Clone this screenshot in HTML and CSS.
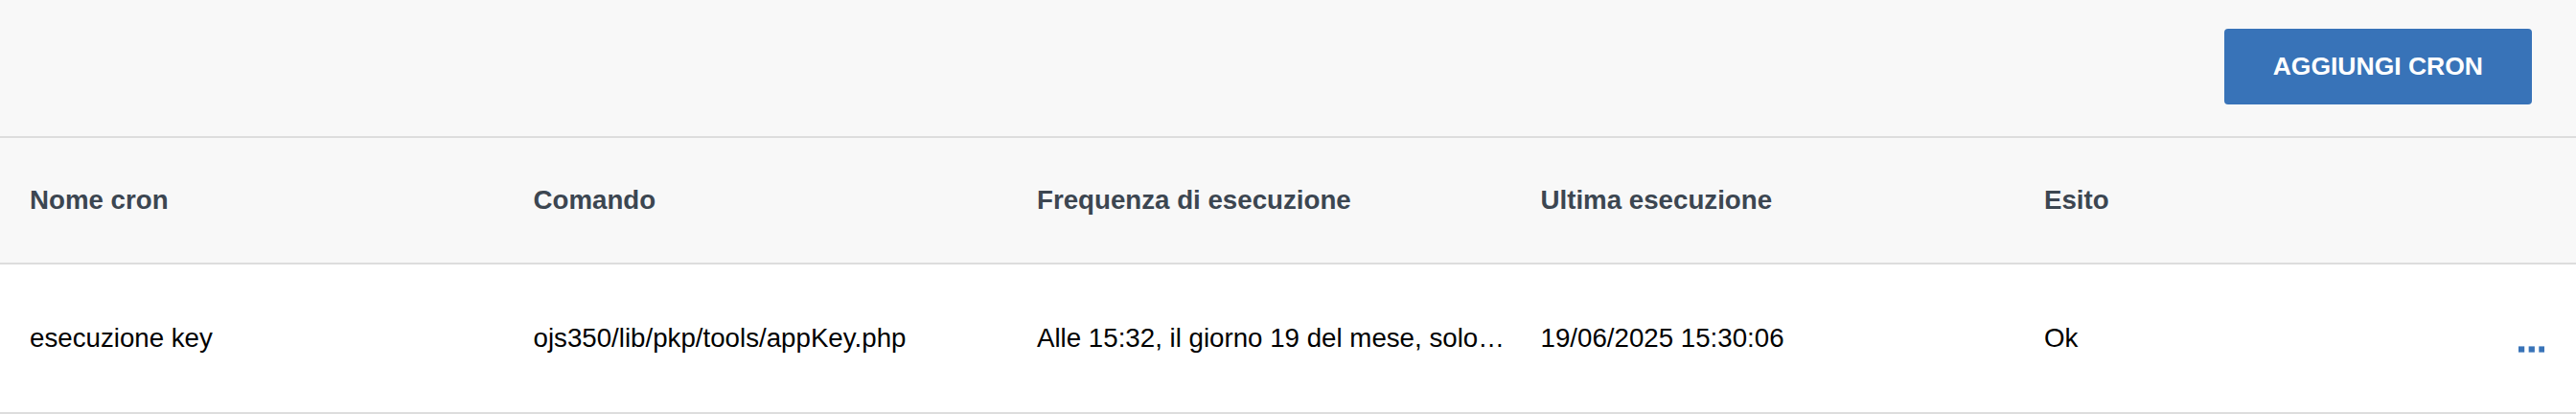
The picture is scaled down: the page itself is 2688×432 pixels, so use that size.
FILE: index.html
```html
<!DOCTYPE html>
<html lang="it">
<head>
    <meta charset="UTF-8">
    <meta name="viewport" content="width=device-width, initial-scale=1.0">
    <title>Cron</title>
    <link rel="stylesheet" href="styles.css">
</head>
<body>
    <div class="toolbar">
        <button class="add-btn">AGGIUNGI CRON</button>
    </div>

    <div class="cron-table">
        <div class="row head">
            <div class="cell">Nome cron</div>
            <div class="cell">Comando</div>
            <div class="cell">Frequenza di esecuzione</div>
            <div class="cell">Ultima esecuzione</div>
            <div class="cell">Esito</div>
            <div class="cell"></div>
        </div>
        <div class="row">
            <div class="cell">esecuzione key</div>
            <div class="cell">ojs350/lib/pkp/tools/appKey.php</div>
            <div class="cell">Alle 15:32, il giorno 19 del mese, solo…</div>
            <div class="cell">19/06/2025 15:30:06</div>
            <div class="cell">Ok</div>
            <div class="cell actions">
                <svg width="31" height="7" viewBox="0 0 31 7" fill="#3873b8">
                    <rect x="0" y="0" width="7" height="7"/>
                    <rect x="12" y="0" width="7" height="7"/>
                    <rect x="24" y="0" width="7" height="7"/>
                </svg>
            </div>
        </div>
    </div>
</body>
</html>
```

FILE: styles.css
```css
/* Stili generali */
body {
    margin: 0;
    font-family: "Liberation Sans", Arial, sans-serif;
    background-color: #fff;
    color: #000;
}

/* Barra superiore */
.toolbar {
    display: flex;
    justify-content: flex-end;
    padding: 30px 46px 33px;
    background-color: #f8f8f8;
    border-bottom: 2px solid #dddddd;
}

.add-btn {
    height: 79px;
    padding: 0 51px;
    font-family: inherit;
    font-size: 26.5px;
    font-weight: bold;
    color: #fff;
    background-color: #3873b8;
    border: none;
    border-radius: 4px;
    cursor: pointer;
}

/* Tabella dei cron */
.row {
    display: grid;
    grid-template-columns: repeat(5, 525.5px) minmax(0, 1fr);
    height: 154px;
    border-bottom: 2px solid #dddddd;
    font-size: 27.7px;
}

.row.head {
    height: 130px;
    background-color: #f8f8f8;
    font-weight: bold;
    color: #3c4651;
}

.cell {
    display: flex;
    align-items: center;
    padding-left: 31px;
    white-space: nowrap;
    min-width: 0;
}

.actions {
    justify-content: flex-end;
    padding: 23px 33px 0 0;
}
```
